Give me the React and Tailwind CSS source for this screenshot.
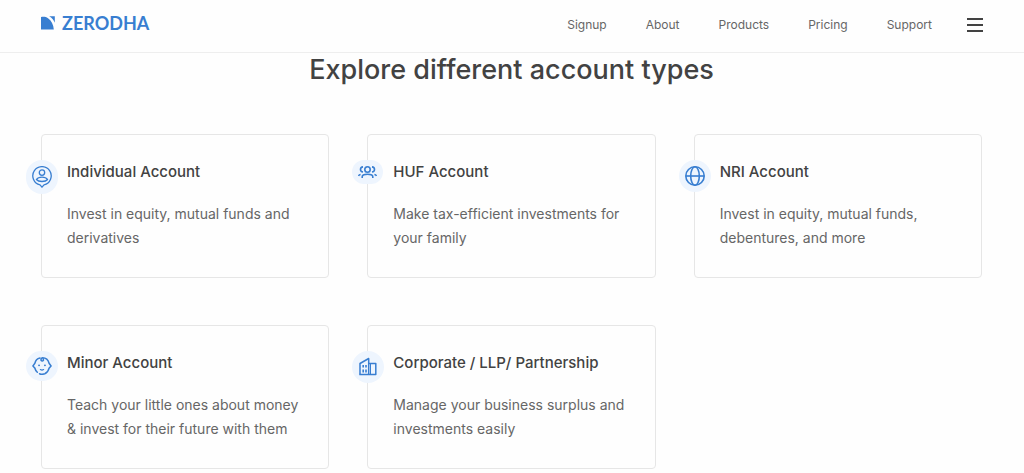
const navLinks = ["Signup", "About", "Products", "Pricing", "Support"];

function Logo() {
  return (
    <svg className="h-[14px] w-[14px]" viewBox="0 0 14 14" fill="#387ed1" aria-hidden="true">
      <path d="M0 1C2.600.4 5 .8 7 2.200C10.400 4.500 12.500 8.500 12.800 13.600H0Z" />
      <path d="M8.200.3H13.800V6.800C12.700 3.900 10.800 1.600 8.200.3Z" />
    </svg>
  );
}

function IndividualIcon() {
  return (
    <svg width="20" height="22" viewBox="0 0 20 22" fill="none" stroke="#387ed1" strokeWidth="1.3" strokeLinejoin="round">
      <path d="M8 18.800A9.200 9.200 0 1 1 12 18.800L10 21.200Z" />
      <circle cx="10" cy="6.600" r="2.700" />
      <path d="M4.400 13.500C5.500 11.900 7.600 11.100 10 11.100S14.500 11.900 15.600 13.500C14.500 14.900 12.400 15.500 10 15.500S5.500 14.900 4.400 13.500Z" />
    </svg>
  );
}

function FamilyIcon() {
  return (
    <svg width="19" height="12" viewBox="0 0 19 12" fill="none" stroke="#387ed1" strokeWidth="1.600">
      <circle cx="9.500" cy="3.500" r="2.700" />
      <path d="M4.200 12V10.800C4.200 8.900 6.300 8.300 9.500 8.300S14.800 8.900 14.800 10.800V12" />
      <path d="M5 .9C3.400 1 2.500 2 2.500 3.400S3.400 5.800 5 6" />
      <path d="M14 .9C15.600 1 16.500 2 16.500 3.400S15.600 5.800 14 6" />
      <path d="M.5 10C.8 9.200 1.500 8.700 2.600 8.500M18.500 10C18.200 9.200 17.500 8.700 16.400 8.500" />
    </svg>
  );
}

function GlobeIcon() {
  return (
    <svg width="20" height="20" viewBox="0 0 20 20" fill="none" stroke="#387ed1" strokeWidth="1.600">
      <circle cx="10" cy="10" r="9.200" />
      <ellipse cx="10" cy="10" rx="4.300" ry="9.200" />
      <path d="M1 10H19" />
    </svg>
  );
}

function BabyIcon() {
  return (
    <svg width="20" height="18" viewBox="0 0 20 18" fill="none" stroke="#387ed1" strokeWidth="1.500" strokeLinecap="round">
      <path d="M8 1.100C5.400 1.700 3.400 3.700 2.900 6.300L.9 9L2.900 11.200C3.300 12.800 4.100 14.200 5.300 15.300" />
      <path d="M7.500 16.700C9.100 17.400 11.200 17.400 12.800 16.800C15 15.900 16.500 13.800 17.100 11.200L19.100 9L17.100 6.300C16.300 3.200 13.800.8 10.500.8C8.700 1.300 8.400 4 10.200 4C11.300 4 11.700 3.100 11.300 2.400" />
      <path d="M7 8.300H7.100M12.900 8.300H13" strokeWidth="1.800" />
      <path d="M8.400 12.600C9.300 13.100 10.700 13.100 11.600 12.600" strokeWidth="1.200" />
    </svg>
  );
}

function BuildingIcon() {
  return (
    <svg width="20" height="20" viewBox="0 0 20 20" fill="none" stroke="#387ed1" strokeWidth="1.500" strokeLinejoin="round">
      <path d="M2 17.400V6.500L10.700 1.500V17.400" />
      <path d="M10.700 6.600H17.800V17.400H1.300" />
      <path d="M12.500 7V17.400" strokeWidth="1" />
      <path d="M5.200 8V10.500M8 8V10.500M5.200 12.500V15.500M8 12.500V15.500" strokeWidth="1.600" />
    </svg>
  );
}

const accounts = [
  {
    icon: IndividualIcon,
    title: "Individual Account",
    desc: "Invest in equity, mutual funds and derivatives",
  },
  {
    icon: FamilyIcon,
    title: "HUF Account",
    desc: "Make tax-efficient investments for your family",
  },
  {
    icon: GlobeIcon,
    title: "NRI Account",
    desc: "Invest in equity, mutual funds, debentures, and more",
  },
  {
    icon: BabyIcon,
    title: "Minor Account",
    desc: "Teach your little ones about money & invest for their future with them",
  },
  {
    icon: BuildingIcon,
    title: "Corporate / LLP/ Partnership",
    desc: "Manage your business surplus and investments easily",
  },
];

export default function App() {
  return (
    <div className="min-h-screen bg-[#fefefe] font-['Inter',sans-serif] text-[#424242]">
      {/* Header */}
      <header className="border-b border-[#eeeeee]">
        <div className="flex h-[52px] items-center justify-between px-[41px]">
          <a href="#" className="flex items-center gap-[7px] pb-1.5 text-[#387ed1]">
            <Logo />
            <span className="font-['Lato',sans-serif] text-[18px] leading-5 font-bold">ZERODHA</span>
          </a>
          <nav className="flex items-center gap-[39px] pb-0.5 text-[12px] text-[#666666]">
            {navLinks.map((link) => (
              <a key={link} href="#">
                {link}
              </a>
            ))}
            <button type="button" aria-label="Menu" className="-ml-1 flex w-4 flex-col gap-1">
              <span className="h-[2px] bg-[#424242]" />
              <span className="h-[2px] bg-[#424242]" />
              <span className="h-[2px] bg-[#424242]" />
            </button>
          </nav>
        </div>
      </header>

      {/* Account types */}
      <main className="pl-[41px] pr-[42px]">
        <h1 className="text-center text-[27px] leading-[34px] font-medium">
          Explore different account types
        </h1>

        <div className="mt-[47px] grid grid-cols-3 gap-x-[38px] gap-y-[47px]">
          {accounts.map((account) => (
            <article
              key={account.title}
              className="relative rounded border border-[#e6e6e6] px-[25px] pt-[25px] pb-[27px]"
            >
              <span className="absolute top-[25px] -left-4 rounded-full bg-[#eef5fe] p-[6px]">
                <account.icon />
              </span>
              <h2 className="text-[15px] leading-6 font-medium">{account.title}</h2>
              <p className="mt-[18px] text-sm leading-6 text-[#666666]">{account.desc}</p>
            </article>
          ))}
        </div>
      </main>
    </div>
  );
}
